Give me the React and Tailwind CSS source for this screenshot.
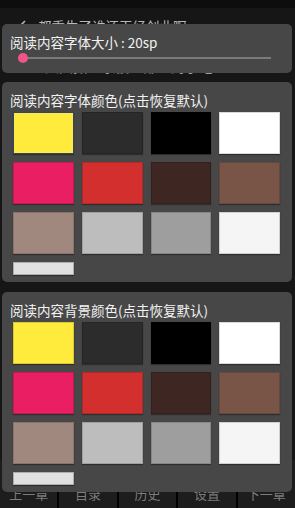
import React, { useState } from 'react';

const SWATCHES = [
  '#ffeb3b', '#2c2c2c', '#000000', '#ffffff',
  '#e91e63', '#d32f2f', '#3e2723', '#795548',
  '#a1887f', '#bdbdbd', '#9e9e9e', '#f5f5f5',
];

const NAV = ['上一章', '目录', '历史', '设置', '下一章'];

function ColorPanel({ title, selected, onPick, className }) {
  return (
    <div className={`bg-[#474747] rounded-[5px] pt-2 pb-[7px] pl-[11px] pr-[12px] ${className}`}>
      <p className="h-5 leading-5 text-[13.5px] text-[#f2f2f2] -ml-[3px]">{title}</p>
      <div className="mt-[2px] grid grid-cols-4 gap-x-[8px] gap-y-[8px]">
        {SWATCHES.map((c, i) => (
          <button
            key={c + i}
            onClick={() => onPick(i)}
            className={`h-[42px] border shadow-[0_1px_1px_rgba(0,0,0,0.35)] ${
              selected === i ? 'border-[#34456b]' : 'border-black/15'
            }`}
            style={{ backgroundColor: c }}
          />
        ))}
        <button
          onClick={() => onPick(-1)}
          className="h-[13px] bg-[#e0e0e0] border border-[#8a8a8a]/60 shadow-[0_1px_1px_rgba(0,0,0,0.35)]"
        />
      </div>
    </div>
  );
}

export default function App() {
  const [fontColor, setFontColor] = useState(0);
  const [bgColor, setBgColor] = useState(null);

  return (
    <div
      className="relative w-[295px] h-[508px] overflow-hidden bg-[#161616] flex flex-col"
      style={{ fontFamily: '"Noto Sans CJK SC", "Noto Sans", sans-serif' }}
    >
      {/* Reader page behind the dialog */}
      <div className="h-2 bg-[#0d0d0d]" />
      <div className="flex items-start pt-[10px] pl-[17px] text-[#b8b8b8]">
        <svg width="10" height="14" viewBox="0 0 10 14" className="mt-[2px]">
          <path d="M8 1 L2 7 L8 13" fill="none" stroke="#b8b8b8" strokeWidth="1.6" />
        </svg>
        <span className="ml-[11px] text-[13.5px] leading-[16px]">都重生了谁还干经创业啊</span>
      </div>
      <p className="mt-[24px] pl-[45px] text-[14px] leading-[16px] text-[#a0a0a0] whitespace-nowrap">
        六大狱一家被全部查封了吧
      </p>
      <div className="flex-1" />
      <div className="h-12 flex gap-[2px] bg-black">
        {NAV.map(n => (
          <div key={n} className="flex-1 bg-[#1d1d1d] flex items-end justify-center pb-[4px]">
            <span className="text-[13px] leading-5 text-[#7c7c7c]">{n}</span>
          </div>
        ))}
      </div>

      {/* Settings dialog */}
      <div className="absolute top-[24px] left-[2px] right-[3px] flex flex-col">
        <div className="bg-[#474747] rounded-[5px] pt-2 pb-[10px] pl-2">
          <p className="h-5 leading-5 text-[13.5px] text-[#f2f2f2]">阅读内容字体大小 : 20sp</p>
          <div className="relative mt-px h-[10px] ml-2 mr-[21px]">
            <div className="absolute left-[5px] right-0 top-[4px] h-[2px] bg-[#7a7a7a]" />
            <div className="absolute left-0 top-0 w-[10px] h-[10px] rounded-full bg-[#f0548a]" />
          </div>
        </div>

        <ColorPanel
          className="mt-[9px]"
          title="阅读内容字体颜色(点击恢复默认)"
          selected={fontColor}
          onPick={setFontColor}
        />
        <ColorPanel
          className="mt-[10px]"
          title="阅读内容背景颜色(点击恢复默认)"
          selected={bgColor}
          onPick={setBgColor}
        />
      </div>
    </div>
  );
}
